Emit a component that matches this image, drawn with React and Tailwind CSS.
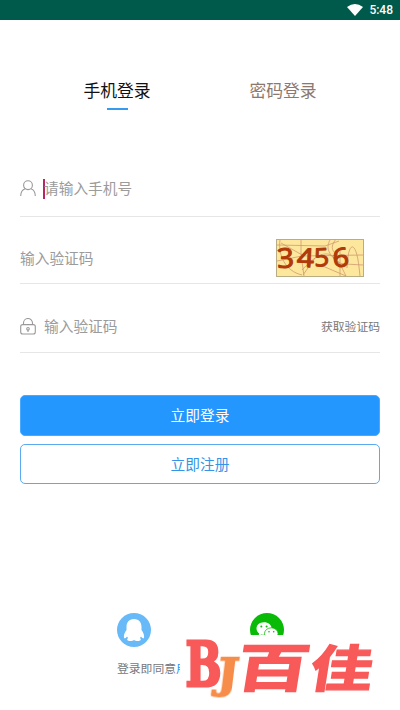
const line = 'border-b border-[#e6e6e6]';

function Captcha() {
  return (
    <svg width="88" height="38" viewBox="0 0 88 38" className="mr-4 block shrink-0" fontFamily="'Open Sans', sans-serif">
      <rect x=".5" y=".5" width="87" height="37" fill="#fde79c" stroke="#b9ad86" />
      <g fill="none" stroke="#d09a70" strokeWidth=".8">
        <path d="M4 1C2 16 9 32 26 36M25 1v14L28 37M1 6l48 1 14-5M1 22l25-5 61-1M26 31C37 19 45 14 52 15s4 9 17 10l18 1M54 1c-5 9 0 16 9 22l7 14M60 0c-7 9-3 13 2 16M71 29c1-28 9-28 12-1l1 9M42 25l28 12M64 12v25M27 36l12-17M5 4l23 13" />
      </g>
      <g fill="#b03a08" stroke="#b03a08" strokeWidth="1.1" strokeLinejoin="round">
        <text transform="translate(1.5 29) rotate(-3) scale(1.1 1)" fontSize="27">3</text>
        <text transform="translate(20.5 27.5) rotate(3) scale(1.15 1)" fontSize="26">4</text>
        <text transform="translate(38.5 27.5) rotate(-3) scale(1.05 1)" fontSize="25">5</text>
        <text transform="translate(57.5 28.5) rotate(-6) scale(1.1 1)" fontSize="26">6</text>
      </g>
    </svg>
  );
}

function Brand() {
  return (
    <svg width="220" height="75" viewBox="180 635 220 75" className="absolute left-[180px] top-[635px] overflow-visible bg-white" strokeLinejoin="miter">
      <g fill="#f85959" stroke="#f85959">
        <text transform="translate(185.5 685.5) scale(.7 1)" fontFamily="'DejaVu Serif', serif" fontWeight="700" fontSize="61" strokeWidth="3">B</text>
        <g fontFamily="'Noto Sans CJK SC', sans-serif" fontWeight="700" strokeWidth="1.4">
          <text transform="translate(234 686.5) skewX(-9) scale(1.4 1)" fontSize="52">百</text>
          <text transform="translate(308 686.5) skewX(-9) scale(1.25 1)" fontSize="50">佳</text>
        </g>
      </g>
      <text transform="translate(216 687.5) skewX(-7) scale(1.1 1)" fontFamily="'DejaVu Serif', serif" fontWeight="700" fontSize="40" fill="#f78d4a" stroke="#f78d4a" strokeWidth="1.8" className="drop-shadow-[-1px_-1px_0_white]">J</text>
    </svg>
  );
}

export default function App() {
  return (
    <div className="relative flex h-[710px] w-[400px] flex-col overflow-hidden bg-white font-['Noto_Sans_CJK_SC',sans-serif] text-[14.7px] text-[#9b9b9b]">
      <header className="flex h-5 shrink-0 items-center justify-end gap-[6px] bg-[#005a4c] pr-[7px] text-white">
        <svg width="16" height="12" viewBox="0 0 16 12"><path d="M0 3Q8-3 16 3L8 12Z" fill="currentColor" /></svg>
        <span className="font-[Roboto,sans-serif] text-[12px] font-medium leading-5">5:48</span>
      </header>

      <nav className="mx-[34px] mt-[57px] grid h-[33px] shrink-0 grid-cols-2 text-center text-[16.8px] leading-[27px]">
        <div className="flex flex-col items-center text-[#111]">
          <span>手机登录</span>
          <i className="mt-1 h-[2px] w-[21px] bg-[#359bee]" />
        </div>
        <span className="text-[#8b7970]">密码登录</span>
      </nav>

      <main className="mx-5 flex flex-col">
        <div className={`mt-[51px] flex h-[56px] items-center ${line}`}>
          <svg width="16" height="17" viewBox="0 0 16 17" fill="none" stroke="#999" strokeWidth="1.1">
            <circle cx="8" cy="5.2" r="4.4" /><path d="M.7 16C.8 11.7 3 9.5 5.2 8.8M10.8 8.8c2.3.7 4.4 2.9 4.5 7.2" />
          </svg>
          <i className="ml-[7px] h-5 w-[2px] bg-[#b82565]" />
          <span className="-ml-px">请输入手机号</span>
        </div>
        <div className={`flex h-[67px] items-center justify-between pt-[16px] ${line}`}>
          <span>输入验证码</span>
          <Captcha />
        </div>
        <div className={`flex h-[69px] items-center pt-[17px] ${line}`}>
          <svg width="16" height="17" viewBox="0 0 16 17" fill="none" stroke="#999" strokeWidth="1.1">
            <rect x=".7" y="6.6" width="14.6" height="9.4" rx="2" /><path d="M3.5 6.5V5a4.5 4.5 0 0 1 9 0v1.5M8 12v2" /><circle cx="8" cy="10.8" r="1.3" />
          </svg>
          <span className="ml-2">输入验证码</span>
          <span className="-mt-px ml-auto text-[11.8px] text-[#777]">获取验证码</span>
        </div>
        <button className="mt-[42px] h-[41px] rounded-[5px] border border-[#49a9ff] bg-[#2497ff] text-white">立即登录</button>
        <button className="mt-2 h-[40px] rounded-[5px] border border-[#5baaf0] bg-white text-[#3594e7]">立即注册</button>
      </main>

      <div className="ml-[117px] mt-[129px] flex gap-[99px]">
        <svg width="34" height="34" viewBox="0 0 34 34">
          <circle cx="17" cy="17" r="17" fill="#67b9f8" />
          <path d="M17 6C11.5 6 9.5 10 9.5 14v3c-2 3-3 5-2.5 8 1 1 2-.3 3-1.5l1 1.5c-2 2 0 3 2 3 2 0 3-.3 4-1 1 .7 2 1 4 1s4-1 2-3l1-1.5c1 1.2 2 2.5 3 1.5 .5-3-.5-5-2.5-8v-3c0-4-2-8-7.5-8Z" fill="#fff" />
        </svg>
        <svg width="36" height="34" viewBox="0 0 36 34">
          <circle cx="17" cy="17" r="17" fill="#09bb07" />
          <path d="M14 9.2c-4.4 0-7.5 2.8-7.5 6.2 0 2.1 1 3.8 2.7 5L8.4 23l3-1.6c.9.3 1.8.4 2.8.4 4.2 0 7.4-2.7 7.4-6.3S18.3 9.2 14 9.2Z" fill="#fff" />
          <ellipse cx="21.3" cy="20.6" rx="6.8" ry="5.8" fill="#fff" stroke="#09bb07" strokeWidth=".8" />
          <g fill="#09bb07"><circle cx="11.3" cy="13.4" r="1" /><circle cx="16.6" cy="13.4" r="1" /><circle cx="19" cy="18.7" r=".8" /><circle cx="23.7" cy="18.7" r=".8" /></g>
        </svg>
      </div>
      <p className="ml-[117px] mt-[12px] whitespace-nowrap text-[11.8px] leading-[18px] text-[#777]">登录即同意<span className="text-[#2497ff]">用</span></p>
      <Brand />
    </div>
  );
}
